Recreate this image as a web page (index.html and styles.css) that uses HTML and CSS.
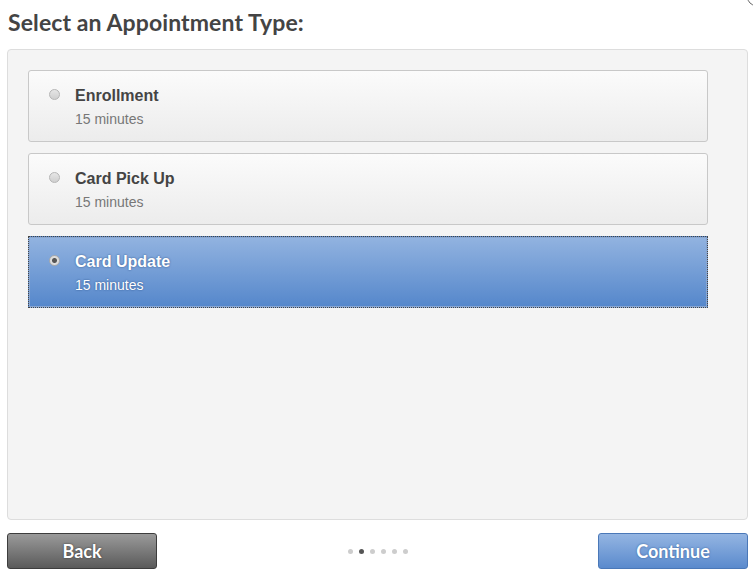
FILE: index.html
```html
<!DOCTYPE html>
<html lang="en">
<head>
    <meta charset="UTF-8">
    <meta name="viewport" content="width=device-width, initial-scale=1.0">
    <link rel="stylesheet" href="styles.css">
</head>
<body>
    <div class="close-corner"></div>
    <h2 class="step-title">Select an Appointment Type:</h2>

    <div class="choices">
        <label class="choice">
            <span class="radio"></span>
            <span class="choice-text">
                <span class="choice-name">Enrollment</span>
                <span class="choice-time">15 minutes</span>
            </span>
        </label>
        <label class="choice">
            <span class="radio"></span>
            <span class="choice-text">
                <span class="choice-name">Card Pick Up</span>
                <span class="choice-time">15 minutes</span>
            </span>
        </label>
        <label class="choice selected">
            <span class="radio"></span>
            <span class="choice-text">
                <span class="choice-name">Card Update</span>
                <span class="choice-time">15 minutes</span>
            </span>
        </label>
    </div>

    <div class="nav">
        <button class="btn btn-back">Back</button>
        <div class="steps">
            <span class="dot"></span>
            <span class="dot current"></span>
            <span class="dot"></span>
            <span class="dot"></span>
            <span class="dot"></span>
            <span class="dot"></span>
        </div>
        <button class="btn btn-continue">Continue</button>
    </div>
</body>
</html>
```

FILE: styles.css
```css
body {
    margin: 0;
    padding: 0 5px 0 7px;
    font-family: Arial, "Liberation Sans", sans-serif;
    background: #fff;
    position: relative;
    height: 578px;
    overflow: hidden;
}
.close-corner {
    position: absolute;
    right: -12px;
    top: -12px;
    width: 16px;
    height: 16px;
    border: 1px solid #666;
    border-radius: 50%;
}
.step-title {
    margin: 0;
    padding: 8px 0 0 1px;
    height: 49px;
    box-sizing: border-box;
    font-family: Lato, "Open Sans", sans-serif;
    font-size: 23px;
    font-weight: 700;
    color: #444;
    letter-spacing: 0.1px;
}
.choices {
    height: 471px;
    box-sizing: border-box;
    background: #f4f4f4;
    border: 1px solid #ddd;
    border-radius: 4px;
    padding: 20px 39px 0 20px;
    display: flex;
    flex-direction: column;
    gap: 11px;
}
.choice {
    display: flex;
    align-items: flex-start;
    height: 72px;
    box-sizing: border-box;
    padding: 16px 0 0 20px;
    border: 1px solid #c8c8c8;
    border-radius: 3px;
    background: linear-gradient(#fbfbfb, #ececec);
}
.radio {
    width: 11px;
    height: 11px;
    box-sizing: border-box;
    margin: 2px 15px 0 0;
    border: 1px solid #b5b5b5;
    border-radius: 50%;
    background: linear-gradient(#e6e6e6, #cfcfcf);
}
.choice-text {
    display: flex;
    flex-direction: column;
    gap: 6px;
}
.choice-name {
    font-size: 16px;
    font-weight: bold;
    color: #444;
}
.choice-time {
    font-size: 14px;
    color: #777;
}
.choice.selected {
    border: 1px dotted #444;
    border-radius: 0;
    background: linear-gradient(#92b3e0, #5587cb);
    box-shadow: inset 0 0 0 1px #8aa6cf;
}
.choice.selected .radio {
    border-color: #aaa;
    background: radial-gradient(circle, #555 0 2px, #ddd 3px);
}
.choice.selected .choice-name,
.choice.selected .choice-time {
    color: #fff;
    text-shadow: 0 0 2px #2a4f86;
}
.nav {
    display: flex;
    align-items: center;
    justify-content: space-between;
    padding-top: 13px;
}
.btn {
    width: 150px;
    height: 36px;
    font-family: Lato, "Open Sans", sans-serif;
    font-size: 18px;
    font-weight: 700;
    color: #fff;
    border-radius: 3px;
    text-shadow: 0 0 2px #333;
}
.btn-back {
    background: linear-gradient(#9a9a9a, #5a5a5a);
    border: 1px solid #3d3d3d;
}
.btn-continue {
    background: linear-gradient(#94b5e2, #5a8acd);
    border: 1px solid #4a78b8;
    text-shadow: 0 0 2px #2d5a96;
}
.steps {
    display: flex;
    gap: 6px;
}
.dot {
    width: 5px;
    height: 5px;
    border-radius: 50%;
    background: #cdcdcd;
}
.dot.current {
    background: #555;
}
```
